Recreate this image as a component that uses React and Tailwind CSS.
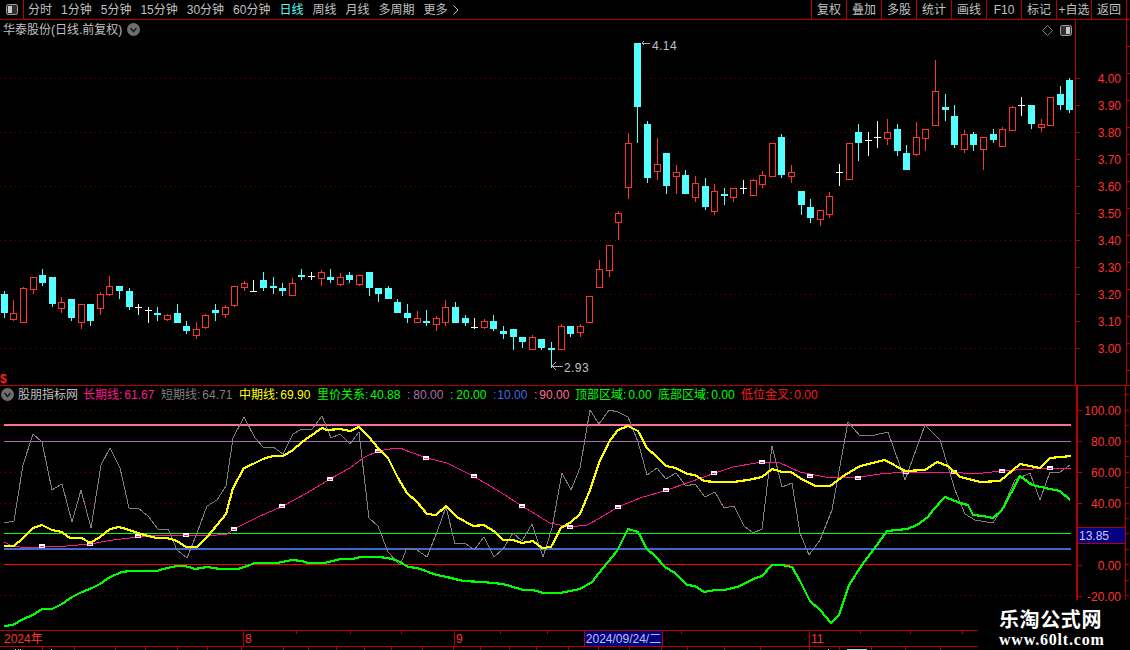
import React from "react";

const RED = "#ff3232";
const LINE = "#b40000";

const periods = ["分时", "1分钟", "5分钟", "15分钟", "30分钟", "60分钟", "日线", "周线", "月线", "多周期", "更多"];
const actions = ["复权", "叠加", "多股", "统计", "画线", "F10", "标记", "+自选", "返回"];

// kind, wick top, body top, body bottom, wick bottom (pixel rows of the picture)
const candles = [
  ["c",291,294,313,318],["r",300,313,319,321],["r",287,288,322,322],["r",277,277,289,294],["c",269,275,283,286],
  ["c",277,277,304,307],["r",297,302,308,313],["c",299,299,318,321],["r",304,304,322,329],["c",304,304,321,326],
  ["r",292,294,308,315],["r",276,286,294,296],["c",286,286,291,299],["c",288,291,307,310],["w",304,307,307,315],
  ["w",307,310,310,323],["c",307,313,315,321],["r",314,315,319,321],["c",304,313,323,323],["c",321,326,331,334],
  ["r",322,329,335,339],["r",314,315,327,329],["c",304,310,313,321],["r",305,307,314,318],["r",286,286,305,307],
  ["r",281,283,287,291],["w",280,291,291,292],["c",272,280,288,291],["c",277,286,288,294],["c",283,288,291,296],
  ["r",278,283,295,296],["c",269,275,277,280],["w",272,276,276,280],["r",270,272,278,286],["c",269,277,280,283],
  ["r",273,277,284,286],["c",272,275,280,283],["r",275,275,284,286],["c",272,272,288,296],["c",288,288,294,302],
  ["c",286,288,299,299],["c",299,302,313,313],["c",304,313,318,323],["r",311,318,322,323],["c",310,321,323,326],
  ["r",316,318,324,331],["r",300,307,322,326],["c",302,307,323,323],["c",315,318,323,326],["w",318,327,327,329],
  ["r",319,321,327,329],["c",315,321,329,331],["c",326,331,334,339],["c",329,329,337,350],["c",337,337,342,348],
  ["r",335,337,349,349],["c",339,339,348,350],["c",342,348,350,368],["r",324,326,349,350],["c",326,326,334,337],
  ["r",324,326,332,337],["r",296,296,322,323],["r",260,269,287,287],["r",245,245,270,277],["r",211,213,222,240],
  ["r",133,143,187,199],["c",43,43,107,143],["c",121,124,178,183],["r",138,164,171,180],["c",153,153,186,194],
  ["r",165,172,176,194],["c",170,175,194,194],["r",176,183,197,202],["c",178,186,207,210],["r",184,191,211,215],
  ["c",188,194,196,205],["r",188,188,197,202],["w",180,188,188,194],["r",179,180,195,196],["r",171,175,184,188],
  ["r",143,143,176,176],["c",134,137,175,178],["r",165,172,176,183],["c",191,191,205,215],["c",199,207,218,223],
  ["r",210,210,219,226],["r",192,196,214,218],["w",164,172,172,186],["r",143,143,179,180],["c",124,132,143,161],
  ["w",132,140,140,156],["w",121,137,137,148],["r",119,132,138,145],["c",124,129,151,156],["c",145,153,170,170],
  ["r",122,137,154,156],["r",129,129,138,151],["r",60,91,125,126],["c",94,107,110,121],["c",105,116,145,148],
  ["r",130,134,149,153],["c",132,134,145,151],["r",137,137,149,170],["c",129,134,140,143],["r",127,129,146,146],
  ["r",106,107,130,130],["w",97,105,105,116],["c",105,105,124,129],["r",119,124,127,132],["r",97,97,125,126],
  ["c",86,94,105,110],["c",78,80,110,113],
];

const pts = (list) => list.map(([x, y]) => `${x},${y}`).join(" ");

const grayLine = [[4,523],[14,521],[23,465],[33,434],[42,442],[52,490],[62,484],[72,522],[81,490],[91,528],[101,465],[110,448],[120,468],[129,508],[138,508],[148,516],[158,529],[168,529],[177,550],[187,558],[197,533],[207,506],[217,500],[226,486],[233,438],[244,417],[255,438],[263,447],[273,447],[283,454],[293,434],[302,429],[312,429],[322,416],[331,438],[340,434],[350,444],[359,432],[369,518],[378,526],[388,552],[400,565],[407,548],[417,550],[427,557],[437,532],[446,507],[455,544],[465,543],[474,550],[484,537],[494,557],[503,549],[513,533],[522,541],[532,524],[543,557],[552,528],[562,473],[571,490],[580,468],[590,410],[599,424],[609,410],[618,412],[628,417],[638,442],[647,475],[657,468],[666,479],[676,473],[686,486],[695,484],[705,497],[715,492],[724,508],[734,506],[744,526],[753,533],[762,529],[772,446],[782,487],[792,483],[800,533],[809,555],[820,540],[832,510],[848,422],[860,436],[875,435],[888,432],[905,480],[925,425],[940,440],[955,490],[965,514],[975,520],[993,523],[1003,507],[1015,480],[1030,473],[1040,500],[1050,472],[1060,472],[1070,465]];
const pinkLine = [[4,542],[10,545],[20,547],[42,547],[67,546],[90,544],[113,540],[138,537],[160,535],[187,535],[207,536],[227,534],[234,529],[258,517],[283,506],[307,493],[330,479],[350,468],[363,458],[378,451],[390,449],[400,448],[410,452],[427,458],[447,463],[473,476],[497,490],[522,506],[540,517],[550,523],[570,527],[587,525],[600,518],[618,507],[640,498],[667,490],[690,482],[715,473],[733,467],[762,462],[780,463],[800,472],[830,478],[860,477],[880,474],[905,472],[950,472],[975,474],[1000,471],[1050,468],[1071,468]];
const yellowLine = [[4,546],[14,546],[23,538],[33,528],[42,525],[52,530],[62,532],[70,538],[82,538],[90,543],[100,537],[110,529],[119,527],[129,530],[138,533],[148,536],[157,538],[167,538],[177,541],[186,547],[197,547],[207,537],[217,525],[226,514],[233,488],[244,468],[253,464],[263,459],[273,456],[283,456],[293,450],[302,442],[312,435],[322,428],[327,430],[340,429],[350,431],[359,427],[369,437],[378,448],[388,458],[398,478],[407,493],[417,502],[427,514],[436,515],[446,506],[457,517],[473,526],[484,525],[495,532],[503,540],[513,540],[522,543],[533,541],[542,548],[551,547],[561,528],[571,522],[580,514],[590,490],[599,463],[609,442],[618,430],[628,426],[638,431],[647,448],[657,457],[666,466],[676,468],[687,474],[695,475],[704,481],[715,482],[733,482],[748,480],[762,477],[772,469],[782,472],[791,472],[800,478],[815,486],[830,486],[845,475],[860,466],[885,460],[905,471],[925,470],[937,462],[948,466],[960,477],[980,482],[1000,481],[1020,464],[1040,468],[1050,458],[1071,456]];
const greenLine = [[4,626],[13,625],[23,619],[33,615],[42,609],[52,609],[62,604],[72,597],[82,592],[92,588],[100,584],[110,577],[122,572],[130,571],[157,571],[167,568],[177,566],[185,566],[195,569],[207,567],[220,569],[238,569],[247,566],[255,563],[267,563],[277,563],[292,560],[302,561],[308,563],[325,563],[340,559],[353,559],[360,557],[378,557],[388,558],[398,561],[400,562],[408,567],[417,568],[437,575],[447,577],[463,581],[483,582],[503,584],[523,590],[533,590],[543,593],[560,593],[580,589],[592,582],[603,568],[617,551],[628,529],[638,532],[647,549],[655,556],[665,567],[675,573],[687,585],[695,586],[704,592],[715,590],[725,590],[740,586],[753,579],[762,576],[772,565],[782,565],[792,567],[800,581],[810,601],[820,610],[831,623],[839,615],[849,585],[862,565],[874,549],[887,531],[907,529],[917,525],[928,517],[933,510],[945,497],[960,503],[968,505],[973,515],[983,516],[993,518],[1002,510],[1010,495],[1020,476],[1032,485],[1050,489],[1060,491],[1070,500]];
const markers = [[42,546],[90,544],[138,536],[186,535],[234,529],[282,506],[330,479],[378,451],[426,458],[474,476],[522,506],[570,527],[618,507],[666,490],[714,473],[762,462],[810,476],[858,478],[906,472],[954,472],[1002,471],[1050,468]];

const mainLabels = ["4.00", "3.90", "3.80", "3.70", "3.60", "3.50", "3.40", "3.30", "3.20", "3.10", "3.00"];
// the 20.00 row sits under the 13.85 cursor box
const subLabels = ["100.00", "80.00", "60.00", "40.00", "", "0.00", "-20.00"];
const topTicks = [296, 350, 401, 500, 547, 681, 860, 910, 962];
const lowTicks = [42, 74, 115, 145, 177, 207, 241, 283, 308, 336, 364, 391, 422, 453, 480, 509, 536, 568, 598, 629, 661, 687, 724, 760, 809, 839, 871, 905, 940];
const edgeTicksMain = [26, 53, 80, 107, 134, 161, 188, 215, 242, 269, 296, 323, 350];
const edgeTicksSub = [8, 24, 39, 55, 70, 86, 101, 117, 132, 147, 163, 178, 194, 209];

const legend = [
  ["w-[78px]", "text-[#ff1a8c]", "长期线:", "61.67", "ml-[2px]"],
  ["w-[78px]", "text-[#808080]", "短期线:", "64.71", "ml-[2px]"],
  ["w-[78px]", "text-[#ffff00]", "中期线:", "69.90", "ml-[2px]"],
  ["w-[90px]", "text-[#00ff00]", "里价关系:", "40.88", "ml-[2px]"],
  ["w-[43px]", "text-[#a870a8]", ":", "80.00", "ml-[3px]"],
  ["w-[43px]", "text-[#00ff00]", ":", "20.00", "ml-[3px]"],
  ["w-[41px]", "text-[#4169e1]", ":", "10.00", "ml-[1px]"],
  ["w-[41px]", "text-[#ff6e9a]", ":", "90.00", "ml-[2px]"],
  ["w-[83px]", "text-[#00ff00]", "顶部区域:", "0.00", "ml-[2px]"],
  ["w-[83px]", "text-[#00ff00]", "底部区域:", "0.00", "ml-[2px]"],
  ["w-[83px]", "text-[#ff1a1a]", "低位金叉:", "0.00", "ml-[2px]"],
];

const Candle = ({ c, i }) => {
  const [kind, wt, bt, bb, wb] = c;
  const x = Math.floor(4.33 + 9.6 * i);
  if (kind === "w") {
    return (
      <g fill="#ffffff">
        <rect x={x} y={wt} width="1" height={wb - wt} />
        <rect x={x - 3} y={bt} width="7" height="1" />
      </g>
    );
  }
  if (kind === "c") {
    return (
      <g fill="#54ffff">
        <rect x={x} y={wt} width="1" height={wb - wt} />
        <rect x={x - 3} y={bt} width="7" height={bb - bt} />
      </g>
    );
  }
  return (
    <g>
      <rect x={x} y={wt} width="1" height={bt - wt} fill={RED} />
      <rect x={x} y={bb} width="1" height={wb - bb} fill={RED} />
      <rect x={x - 2.5} y={bt + 0.5} width="6" height={bb - bt} fill="none" stroke={RED} />
    </g>
  );
};

const Chevron = () => (
  <svg width="13" height="13" viewBox="0 0 13 13" className="shrink-0">
    <circle cx="6.5" cy="6.5" r="6.5" fill="#6e6e6e" />
    <path d="M3.5 5 L6.5 8.5 L9.5 5" fill="none" stroke="#1c1c1c" strokeWidth="1.5" />
  </svg>
);

const PaneToggle = ({ flip }) => (
  <svg width="12" height="11" viewBox="0 0 12 11" className="shrink-0">
    <rect x="0.5" y="0.5" width="11" height="10" rx="2" fill="#303030" stroke="#a0a0a0" />
    <rect x={flip ? 2 : 6} y="2" width="4" height="7" fill="#c8c8c8" />
  </svg>
);

const EdgeTicks = ({ ticks, height }) => (
  <svg width="3" height={height} className="block shrink-0" shapeRendering="crispEdges">
    {ticks.map((y) => <rect key={y} x="0" y={y} width="3" height="1" fill={LINE} />)}
  </svg>
);

export default function App() {
  return (
    <div className="w-[1130px] h-[650px] bg-black overflow-hidden relative flex flex-col text-[12px] leading-none text-[#c0c0c0] font-['Liberation_Sans','Noto_Sans_CJK_SC',sans-serif]">
      {/* toolbar */}
      <div className="h-[20px] shrink-0 flex items-stretch border-b border-[#b40000]">
        <div className="w-[24px] border-r border-[#b40000] flex items-center justify-center">
          <PaneToggle flip />
        </div>
        <div className="flex items-center gap-[9px] pl-[4px]">
          {periods.map((p) => (
            <span key={p} className={p === "日线" ? "text-[#54ffff]" : ""}>{p}</span>
          ))}
          <svg width="6" height="10" viewBox="0 0 6 10" className="-ml-[4px]">
            <path d="M0.5 0.5 L5 5 L0.5 9.5" fill="none" stroke="#c0c0c0" />
          </svg>
        </div>
        <div className="ml-auto flex mr-[3px]">
          {actions.map((a) => (
            <div key={a} className="w-[35px] border-l border-[#b40000] flex items-center justify-center whitespace-nowrap">{a}</div>
          ))}
          <div className="border-l border-[#b40000]" />
        </div>
      </div>

      {/* price pane */}
      <div className="h-[366px] shrink-0 flex border-b border-[#b40000]">
        <div className="w-[1075px] relative">
          <svg width="1075" height="365" viewBox="0 20 1075 365" shapeRendering="crispEdges" className="block">
            {[78, 132, 186, 240, 294, 348].map((y) => (
              <line key={y} x1="0" x2="1075" y1={y + 0.5} y2={y + 0.5} stroke="#780000" strokeDasharray="1 4" />
            ))}
            {candles.map((c, i) => <Candle key={i} c={c} i={i} />)}
            <path d="M642 43 H650 M642 43 L644 41 M642 43 L644 45" stroke="#b0b0b0" fill="none" />
            <path d="M552 366 H563 M552 366 L556 362 M552 366 L556 370" stroke="#b0b0b0" fill="none" />
            <text x="652" y="50" fontSize="12" fill="#c0c0c0" letterSpacing="0.4">4.14</text>
            <text x="564" y="372" fontSize="12" fill="#c0c0c0" letterSpacing="0.4">2.93</text>
          </svg>
          <div className="absolute top-[3px] left-[3px] flex items-center gap-[5px]">
            <span>华泰股份(日线.前复权)</span>
            <Chevron />
          </div>
          <div className="absolute top-[5px] right-[3px] flex items-center gap-[7px]">
            <svg width="11" height="11" viewBox="0 0 11 11">
              <path d="M5.5 0.5 L10.5 5.5 L5.5 10.5 L0.5 5.5 Z" fill="none" stroke="#808080" />
            </svg>
            <PaneToggle />
          </div>
          <span className="absolute left-0 bottom-0 text-[12px] font-bold text-[#ff2020] leading-[12px]">$</span>
        </div>
        <div className="w-[52px] border-x border-[#b40000] pt-[45px] text-[#ff3232]">
          {mainLabels.map((l) => (
            <div key={l} className="h-[27px] flex items-center">
              <span className="w-[4px] h-px bg-[#b40000]" />
              <span className="ml-auto mr-[5px] mt-[1px]">{l}</span>
            </div>
          ))}
        </div>
        <EdgeTicks ticks={edgeTicksMain} height={365} />
      </div>

      {/* indicator pane */}
      <div className="h-[244px] shrink-0 flex">
        <div className="w-[1076px] shrink-0 flex flex-col">
          <div className="h-[17px] shrink-0 flex items-center pl-[1px] whitespace-nowrap">
            <Chevron />
            <span className="w-[69px] pl-[4px] shrink-0">股朋指标网</span>
            {legend.map(([w, color, name, value, gap]) => (
              <span key={name + value} className={`${w} ${color} shrink-0`}>{name}<span className={gap}>{value}</span></span>
            ))}
          </div>
          <svg width="1075" height="227" viewBox="0 403 1075 227" shapeRendering="crispEdges" className="block">
            {[410, 472, 503, 595].map((y) => (
              <line key={y} x1="0" x2="1075" y1={y + 0.5} y2={y + 0.5} stroke="#780000" strokeDasharray="1 4" />
            ))}
            <rect x="4" y="424" width="1067" height="2" fill="#ff6e9a" />
            <rect x="4" y="441" width="1067" height="1" fill="#a870a8" />
            <rect x="4" y="533" width="1067" height="1" fill="#00ff00" />
            <rect x="4" y="548" width="1067" height="2" fill="#3f68cf" />
            <rect x="4" y="564" width="1067" height="1" fill="#ff0000" />
            <polyline points={pts(grayLine)} fill="none" stroke="#808080" />
            <polyline points={pts(pinkLine)} fill="none" stroke="#ff1493" />
            {markers.map(([x, y]) => (
              <g key={x}>
                <rect x={x - 3} y={y - 2} width="6" height="4" fill="#ffffff" />
                <rect x={x - 2} y={y} width="4" height="1" fill="#ff1493" />
              </g>
            ))}
            <polyline points={pts(yellowLine)} fill="none" stroke="#ffff00" strokeWidth="2.2" />
            <polyline points={pts(greenLine)} fill="none" stroke="#00ff00" strokeWidth="2.2" />
          </svg>
        </div>
        <div className="w-[50px] h-[214px] relative border-l-2 border-r border-[#b40000] pt-[9px] text-[#ff3232] shrink-0">
          {subLabels.map((l, i) => (
            <div key={i} className="h-[31px] flex items-center">
              <span className="w-[4px] h-px bg-[#b40000]" />
              <span className="ml-auto mr-[4px]">{l}</span>
            </div>
          ))}
          <div className="absolute left-0 right-0 top-[141px] h-[17px] bg-[#000080] border-y border-[#b40000] flex items-center pl-[1px] text-[#c8c8ff]">13.85</div>
        </div>
        <EdgeTicks ticks={edgeTicksSub} height={214} />
      </div>

      {/* date axis */}
      <div className="h-[17px] w-[978px] shrink-0 relative flex border-y border-[#b40000] text-[#ff3232] whitespace-nowrap">
        <div className="w-[243px] pl-[4px] flex items-center">2024年</div>
        <div className="w-[211px] pl-[1px] border-l border-[#b40000] flex items-center">8</div>
        <div className="w-[130px] pl-[1px] border-l border-[#b40000] flex items-center">9</div>
        <div className="w-[79px] border-x border-[#b40000] bg-[#000080] text-[#c0c0e0] flex items-center justify-center">2024/09/24/二</div>
        <div className="w-[146px]" />
        <div className="flex-1 pl-[1px] border-l border-[#b40000] flex items-center">11</div>
        <svg width="978" height="3" className="absolute left-0 top-0">
          {topTicks.map((x) => <rect key={x} x={x} y="0" width="1" height="3" fill={LINE} />)}
        </svg>
      </div>
      <svg width="978" height="4" className="block shrink-0" shapeRendering="crispEdges">
        {lowTicks.map((x) => <rect key={x} x={x} y="0" width="1" height="4" fill={LINE} />)}
        {[15, 18, 20, 51, 828].map((x) => <rect key={x} x={x} y="2" width="1" height="2" fill="#e0e0e0" />)}
        <rect x="847" y="2" width="20" height="1" fill="#a0e0e0" />
      </svg>

      {/* site watermark */}
      <div className="absolute right-0 bottom-0 w-[134px] h-[40px] bg-black flex flex-col items-start pl-[3px] text-white font-bold">
        <span className="text-[20px] leading-[20px] tracking-[0.6px]">乐淘公式网</span>
        <span className="text-[16px] leading-[19px] tracking-[0.8px] font-['Liberation_Serif',serif]">www.60lt.com</span>
      </div>
    </div>
  );
}
